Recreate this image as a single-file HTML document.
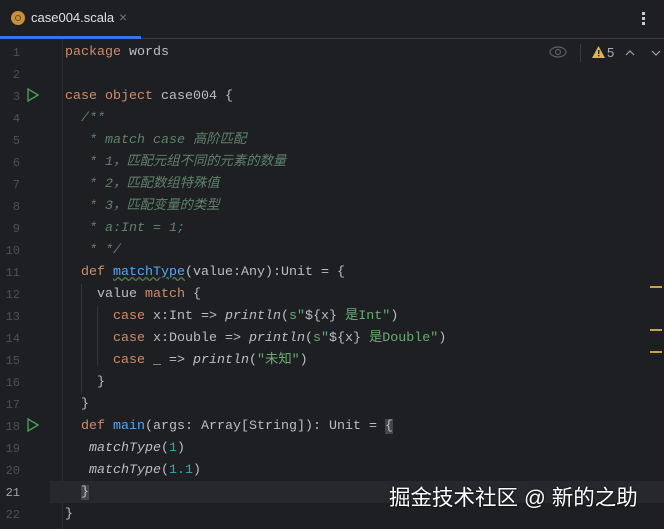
<!DOCTYPE html><html><head><meta charset="utf-8"><style>
body{margin:0;width:664px;height:529px;background:#1e1f22;overflow:hidden;position:relative;font-family:"Liberation Mono","Noto Sans CJK SC",monospace;}
.tab{position:absolute;left:0;top:0;width:664px;height:38px;background:#1e1f22;border-bottom:1px solid #393b40;}
.ln{position:absolute;left:0;width:20px;text-align:right;color:#4b5059;font-size:12px;height:22px;line-height:22px;}
.c{position:absolute;left:65px;white-space:pre;font-size:13.33px;color:#bcbec4;height:22px;line-height:22px;}
.c span{line-height:22px}
.k{color:#cf8e6d}.f{color:#56a8f5}.cm{color:#5f826b;font-style:italic}.s{color:#6aab73}.i{font-style:italic}.n{color:#2aacb8}
.mk{position:absolute;left:650px;width:12px;height:2px;background:#c7a53b}
</style></head><body>
<div class="tab">
<div style="position:absolute;left:11px;top:11px;width:14px;height:14px;border-radius:50%;background:#c8903a"></div>
<div style="position:absolute;left:15px;top:15px;width:4px;height:4px;border-radius:50%;border:1px solid #6a4a1a"></div>
<div style="position:absolute;left:31px;top:10px;color:#dfe1e5;font:13px 'Liberation Sans',sans-serif">case004.scala</div>
<div style="position:absolute;left:119px;top:9px;color:#6f737a;font:14px 'Liberation Sans',sans-serif">×</div>
<div style="position:absolute;left:0;top:36px;width:141px;height:3px;background:#3574f0"></div>
<div style="position:absolute;left:642px;top:12px;width:3px;height:3px;background:#ccc;box-shadow:0 5px #ccc,0 10px #ccc"></div>
</div>
<div style="position:absolute;left:62px;top:39px;width:1px;height:490px;background:#2b2d30"></div>
<div style="position:absolute;left:50px;top:481px;width:614px;height:22px;background:#26282e"></div>
<svg style="position:absolute;left:549px;top:46px" width="18" height="12"><ellipse cx="9" cy="6" rx="8" ry="5" fill="none" stroke="#5a5d63" stroke-width="1.2"/><circle cx="9" cy="6" r="2.5" fill="none" stroke="#5a5d63" stroke-width="1.2"/></svg>
<div style="position:absolute;left:580px;top:44px;width:1px;height:18px;background:#393b40"></div>
<svg style="position:absolute;left:592px;top:46px" width="13" height="12"><path d="M6.5 0 L13 12 L0 12Z" fill="#e0b54a"/><rect x="6" y="4" width="1.4" height="4" fill="#1e1f22"/><rect x="6" y="9" width="1.4" height="1.4" fill="#1e1f22"/></svg>
<div style="position:absolute;left:607px;top:45px;color:#a8adbd;font:13px 'Liberation Sans',sans-serif">5</div>
<svg style="position:absolute;left:625px;top:48px" width="36" height="10"><path d="M1 7 L5 3 L9 7 M27 3 L31 7 L35 3" fill="none" stroke="#9da0a8" stroke-width="1.2"/></svg>
<svg style="position:absolute;left:27px;top:88px" width="12" height="14"><path d="M1 1 L11 7 L1 13Z" fill="none" stroke="#499c54" stroke-width="1.4"/></svg>
<svg style="position:absolute;left:27px;top:418px" width="12" height="14"><path d="M1 1 L11 7 L1 13Z" fill="none" stroke="#499c54" stroke-width="1.4"/></svg>
<div class="mk" style="top:286px"></div><div class="mk" style="top:329px"></div><div class="mk" style="top:351px"></div>
<div style="position:absolute;left:81px;top:284px;width:1px;height:110px;background:#313338"></div>
<div style="position:absolute;left:97px;top:306px;width:1px;height:60px;background:#313338"></div>
<div id="L"></div>
<script>
var L=[
'<span class="k">package</span> words','',
'<span class="k">case object</span> case004 {',
'  <span class="cm">/**</span>',
'   <span class="cm">* match case 高阶匹配</span>',
'   <span class="cm">* 1，匹配元组不同的元素的数量</span>',
'   <span class="cm">* 2，匹配数组特殊值</span>',
'   <span class="cm">* 3，匹配变量的类型</span>',
'   <span class="cm">* a:Int = 1;</span>',
'   <span class="cm">* */</span>',
'  <span class="k">def</span> <span class="f" style="text-decoration:underline wavy #5a7a4a">matchType</span>(value:Any):Unit = {',
'    value <span class="k">match</span> {',
'      <span class="k">case</span> x:Int =&gt; <span class="i">println</span>(<span class="s">s"</span>${x} <span class="s">是Int"</span>)',
'      <span class="k">case</span> x:Double =&gt; <span class="i">println</span>(<span class="s">s"</span>${x} <span class="s">是Double"</span>)',
'      <span class="k">case</span> _ =&gt; <span class="i">println</span>(<span class="s">"未知"</span>)',
'    }','  }',
'  <span class="k">def</span> <span class="f">main</span>(args: Array[String]): Unit = <span style="background:#43454a">{</span>',
'   <span class="i">matchType</span>(<span class="n">1</span>)',
'   <span class="i">matchType</span>(<span class="n">1.1</span>)',
'  <span style="background:#43454a">}</span>','}'];
var h='';for(var i=0;i<L.length;i++){var t=42+i*22;h+='<div class="ln" style="top:'+t+'px'+(i==20?';color:#a1a3ab':'')+'">'+(i+1)+'</div><div class="c" style="top:'+t+'px">'+L[i]+'</div>';}
document.getElementById('L').innerHTML=h;
</script>
<div style="position:absolute;left:389px;top:484px;color:#fff;font:21.5px 'Liberation Sans','Noto Sans CJK SC',sans-serif;line-height:28px;white-space:nowrap;text-shadow:0 0 2px #000">掘金技术社区 @ 新的之助</div>
</body></html>
